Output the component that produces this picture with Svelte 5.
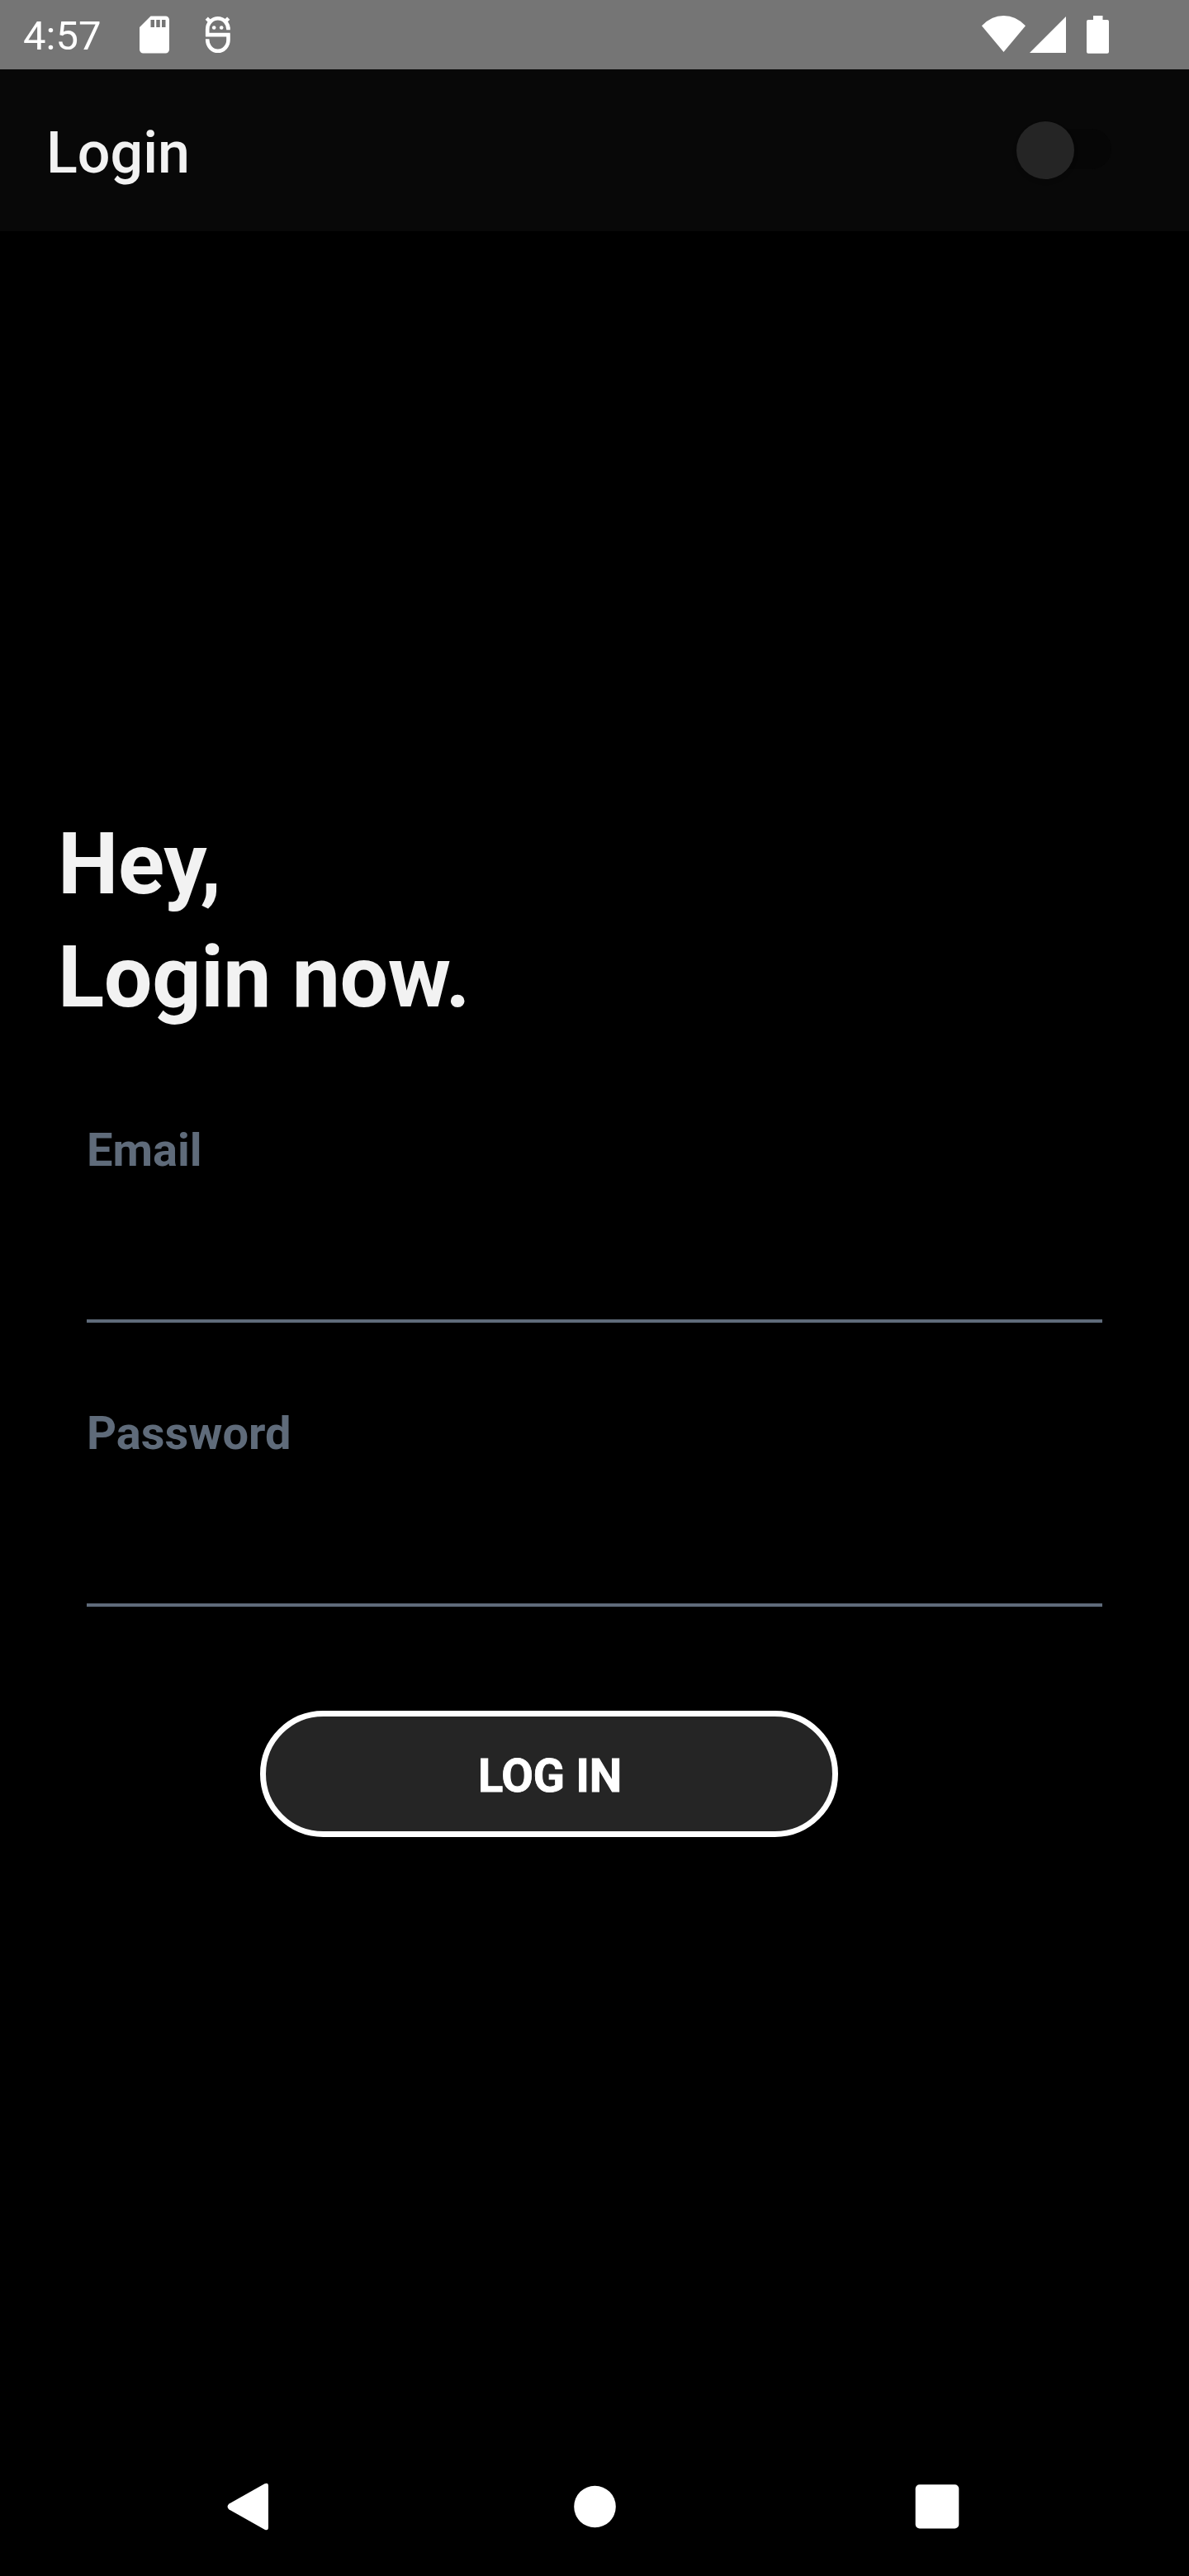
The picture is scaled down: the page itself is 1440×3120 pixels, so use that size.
<script>
  let email = $state('');
  let password = $state('');
</script>

<div class="screen">
  <div class="status">
    <span class="time">4:57</span>
    <svg class="sd" viewBox="0 0 24 24"><path fill-rule="evenodd" d="M18 2h-8L4 8v12c0 1.100.9 2 2 2h12c1.100 0 2-.9 2-2V4c0-1.100-.9-2-2-2zM12 8h-2V4h2zM15 8h-2V4h2zM18 8h-2V4h2z" /></svg>
    <svg class="bug" viewBox="0 0 34 48">
      <path class="stroke" d="M4.200 26V17.500a12.600 13.200 0 0 1 25.300 0M2 24.100h29.700M29.500 15v3.200M29.500 23v7.200a12.650 13.600 0 0 1-25.300 0v-1" />
      <path class="stroke" d="M3.300 4.200l5 5M29.700 4.200l-5 5" />
      <circle cx="12.200" cy="15.500" r="2.300" /><circle cx="21.200" cy="15.500" r="2.300" />
    </svg>
    <div class="radios">
      <svg class="wifi" viewBox="0 0 53 44"><path d="M0 12.300Q11.500 0 26.500 0T53 12.300L26.500 44z" /></svg>
      <svg class="cell" viewBox="0 0 44 44"><path d="M44 0v44H0z" /></svg>
      <svg class="battery" viewBox="0 0 27 46"><path d="M8 0h11.500v5H25a2 2 0 0 1 2 2v36.700a2 2 0 0 1-2 2H2a2 2 0 0 1-2-2V7a2 2 0 0 1 2-2h6z" /></svg>
    </div>
  </div>

  <header>
    <span class="title">Login</span>
    <div class="switch"><div class="thumb"></div></div>
  </header>

  <main>
    <h1>Hey,<br />Login now.</h1>
    <label class="field">Email<input type="email" bind:value={email} /></label>
    <label class="field second">Password<input type="password" bind:value={password} /></label>
    <button>LOG IN</button>
  </main>

  <nav>
    <svg viewBox="0 0 60 60"><path d="M7.500 26.500L50.500 2.300Q55 .5 55 5v50Q55 59.500 50.500 57.700L7.500 33.500Q3.500 30 7.500 26.500z" /></svg>
    <svg viewBox="0 0 60 60"><circle cx="32.500" cy="30" r="25.300" /></svg>
    <svg viewBox="0 0 60 60"><rect x="3.700" y="3.200" width="52.600" height="53.300" rx="5" /></svg>
  </nav>
</div>

<style>
  :global(body) { margin: 0; background: #000; }
  .screen {
    width: 1440px;
    height: 3120px;
    display: flex;
    flex-direction: column;
    background: #000;
    color: #f2f2f2;
    font-family: Roboto, sans-serif;
  }
  svg { display: block; fill: #fff; flex: none; }
  .status {
    height: 84px;
    flex: none;
    display: flex;
    align-items: flex-start;
    background: #757575;
    padding-left: 28px;
  }
  .time { width: 132px; font-size: 49px; line-height: 58px; padding-top: 15px; color: #fff; }
  .sd { width: 54px; height: 54px; margin-top: 15px; }
  .bug { width: 34px; height: 48px; margin: 18px 0 0 33px; }
  .stroke { fill: none; stroke: #fff; stroke-width: 4.600; }
  .radios { display: flex; margin: 19px 97px 0 auto; }
  .wifi { width: 53px; height: 44px; }
  .cell { width: 44px; height: 44px; margin: 1px 25px 0 5px; }
  .battery { width: 27px; height: 46px; }
  header {
    height: 196px;
    flex: none;
    box-sizing: border-box;
    display: flex;
    justify-content: space-between;
    background: #080808;
    padding: 60px 94px 0 56px;
  }
  .title { font-size: 70px; line-height: 82px; font-weight: 500; }
  .switch {
    width: 104px;
    height: 49px;
    margin-top: 12px;
    border-radius: 25px;
    background: #060606;
    display: flex;
    align-items: center;
  }
  .thumb {
    width: 70px;
    height: 70px;
    flex: none;
    margin: 2px 0 0 -11px;
    border-radius: 50%;
    background: #252525;
    box-shadow: 0 3px 5px rgba(0, 0, 0, .15);
  }
  main { flex: 1; display: flex; flex-direction: column; padding: 698px 105px 0; }
  h1 { margin: 0 0 108px -35px; font-size: 104px; line-height: 137px; font-weight: 700; letter-spacing: -.4px; }
  .field {
    display: block;
    height: 242px;
    margin-bottom: 101px;
    font-size: 56px;
    line-height: 66px;
    font-weight: 700;
    color: #5f6b7a;
  }
  .field.second { height: 243px; }
  input {
    display: block;
    box-sizing: border-box;
    width: 100%;
    height: 176px;
    padding: 40px 0 0;
    border: 0;
    border-bottom: 4px solid #5f6b7a;
    background: transparent;
    color: #f2f2f2;
    font: inherit;
    outline: 0;
  }
  .second input { height: 177px; }
  button {
    width: 700px;
    height: 153px;
    margin: 25px 0 0 210px;
    padding: 4px 0 0 2px;
    border: 7px solid #fff;
    border-radius: 77px;
    background: #252525;
    color: #fff;
    font: 700 56px/66px Roboto, sans-serif;
    letter-spacing: -.2px;
    -webkit-text-stroke: .9px #fff;
  }
  nav {
    height: 168px;
    flex: none;
    display: flex;
    justify-content: space-between;
    align-items: center;
    padding: 0 275px 0 270px;
  }
  nav svg { width: 60px; height: 60px; }
</style>
